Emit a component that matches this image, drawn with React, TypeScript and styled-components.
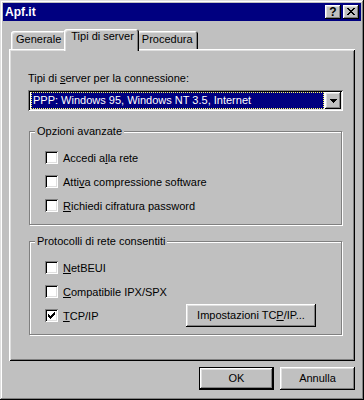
import React from "react";
import styled, { createGlobalStyle } from "styled-components";

const GlobalStyle = createGlobalStyle`
  html, body { margin: 0; padding: 0; background: #c0c0c0; }
  body {
    font-family: "Liberation Sans", Arial, sans-serif;
    font-size: 11px;
    color: #000;
  }
`;

const raised = `
  box-shadow: inset -1px -1px #000, inset 1px 1px #fff, inset -2px -2px #808080, inset 2px 2px #dfdfdf;
`;
const sunken = `
  box-shadow: inset 1px 1px #808080, inset -1px -1px #fff, inset 2px 2px #000, inset -2px -2px #dfdfdf;
`;

const Window = styled.div`
  width: 364px;
  height: 400px;
  box-sizing: border-box;
  padding: 3px;
  background: #c0c0c0;
  box-shadow: inset -1px -1px #000, inset 1px 1px #dfdfdf, inset -2px -2px #808080, inset 2px 2px #fff;
  display: flex;
  flex-direction: column;
`;

const TitleBar = styled.div`
  height: 18px;
  background: #000080;
  display: flex;
  align-items: center;
  padding: 0 2px 0 2px;
  color: #fff;
`;

const TitleText = styled.span`
  flex: 1;
  font-weight: bold;
  font-size: 12px;
  line-height: 18px;
`;

const TitleButtons = styled.div`
  display: flex;
  gap: 2px;
`;

const TitleButton = styled.div`
  width: 16px;
  height: 14px;
  box-sizing: border-box;
  background: #c0c0c0;
  ${raised}
  display: flex;
  align-items: center;
  justify-content: center;
  color: #000;
  font-weight: bold;
  font-size: 12px;
  line-height: 14px;
  padding-bottom: 1px;
`;

const Body = styled.div`
  padding: 8px 6px 0 6px;
  display: flex;
  flex-direction: column;
`;

const TabRow = styled.div`
  display: flex;
  align-items: flex-end;
  height: 20px;
  padding-left: 2px;
  position: relative;
  z-index: 1;
`;

const Tab = styled.div<{ $selected?: boolean }>`
  box-sizing: border-box;
  background: #c0c0c0;
  height: ${(p) => (p.$selected ? 22 : 18)}px;
  margin: ${(p) => (p.$selected ? "0 -2px -2px -2px" : "0")};
  padding: ${(p) => (p.$selected ? "1px 5px 0 7px" : "2px 5px 0 5px")};
  line-height: 13px;
  border-radius: 3px 3px 0 0;
  box-shadow: inset 1px 1px #fff, inset -1px 0 #000, inset -2px 0 #808080, inset 2px 2px #dfdfdf;
  white-space: nowrap;
  position: relative;
  z-index: ${(p) => (p.$selected ? 2 : 1)};
`;

const Panel = styled.div`
  height: 312px;
  box-sizing: border-box;
  box-shadow: inset 1px 1px #fff, inset -1px -1px #000, inset 2px 2px #dfdfdf, inset -2px -2px #808080;
  padding: 23px 12px 0 19px;
  display: flex;
  flex-direction: column;
`;

const Label = styled.div`
  line-height: 13px;
  white-space: nowrap;
`;

const Combo = styled.div`
  margin-top: 5px;
  height: 21px;
  box-sizing: border-box;
  background: #fff;
  ${sunken}
  padding: 2px;
  display: flex;
`;

const ComboValue = styled.div`
  flex: 1;
  margin: 0 1px 0 1px;
  background: #000080;
  color: #fff;
  outline: 1px dotted #ffff60;
  outline-offset: -1px;
  padding-left: 2px;
  line-height: 17px;
  white-space: nowrap;
  overflow: hidden;
`;

const DropButton = styled.div`
  width: 16px;
  height: 17px;
  box-sizing: border-box;
  background: #c0c0c0;
  ${raised}
  display: flex;
  align-items: center;
  justify-content: center;
`;

const Group = styled.fieldset<{ $gap: number }>`
  margin: ${(p) => p.$gap}px 1px 0 1px;
  padding: 13px 25px 12px 15px;
  min-width: 0;
  border: 1px solid #808080;
  box-shadow: inset 1px 1px #fff, 1px 1px #fff;
  display: flex;
  flex-direction: column;
  gap: 11px;
`;

const Legend = styled.legend`
  margin-left: -10px;
  padding: 0 2px;
  line-height: 13px;
  background: #c0c0c0;
  white-space: nowrap;
`;

const CheckRow = styled.div`
  display: flex;
  align-items: center;
  height: 13px;
  gap: 5px;
  white-space: nowrap;
`;

const CheckBox = styled.span`
  width: 13px;
  height: 13px;
  box-sizing: border-box;
  background: #fff;
  ${sunken}
  display: flex;
  align-items: center;
  justify-content: center;
  flex: none;
`;

const Button = styled.button<{ $default?: boolean; $width: number }>`
  width: ${(p) => p.$width}px;
  height: 23px;
  box-sizing: border-box;
  background: #c0c0c0;
  border: ${(p) => (p.$default ? "1px solid #000" : "none")};
  ${raised}
  font-family: "Liberation Sans", Arial, sans-serif;
  font-size: 11px;
  color: #000;
  padding: 0;
  line-height: 13px;
  white-space: nowrap;
`;

const SideButton = styled(Button)`
  margin: -5px 0 -5px auto;
`;

const Footer = styled.div`
  margin-top: 6px;
  display: flex;
  justify-content: flex-end;
  gap: 6px;
`;

const Px = ({ d, w, h }: { d: string; w: number; h: number }) => (
  <svg width={w} height={h} viewBox={`0 0 ${w} ${h}`} shapeRendering="crispEdges">
    <path d={d} fill="#000" />
  </svg>
);

const CLOSE =
  "M0 0h2v1H0z M6 0h2v1H6z M1 1h2v1H1z M5 1h2v1H5z M2 2h4v1H2z M3 3h2v1H3z M2 4h4v1H2z M1 5h2v1H1z M5 5h2v1H5z M0 6h2v1H0z M6 6h2v1H6z";
const CHECK =
  "M6 0h1v1H6z M5 1h2v1H5z M0 2h1v1H0z M4 2h3v1H4z M0 3h2v1H0z M3 3h3v1H3z M0 4h5v1H0z M1 5h3v1H1z M2 6h1v1H2z";
const ARROW = "M0 0h7v1H0z M1 1h5v1H1z M2 2h3v1H2z M3 3h1v1H3z";

const Check = ({ checked, children }: { checked?: boolean; children: React.ReactNode }) => (
  <CheckRow>
    <CheckBox>{checked && <Px d={CHECK} w={7} h={7} />}</CheckBox>
    <span>{children}</span>
  </CheckRow>
);

export default function App() {
  return (
    <>
      <GlobalStyle />
      <Window>
        <TitleBar>
          <TitleText>Apf.it</TitleText>
          <TitleButtons>
            <TitleButton>?</TitleButton>
            <TitleButton>
              <Px d={CLOSE} w={8} h={7} />
            </TitleButton>
          </TitleButtons>
        </TitleBar>
        <Body>
          <TabRow>
            <Tab>Generale</Tab>
            <Tab $selected>Tipi di server</Tab>
            <Tab>Procedura</Tab>
          </TabRow>
          <Panel>
            <Label>
              Tipi di <u>s</u>erver per la connessione:
            </Label>
            <Combo>
              <ComboValue>PPP: Windows 95, Windows NT 3.5, Internet</ComboValue>
              <DropButton>
                <Px d={ARROW} w={7} h={4} />
              </DropButton>
            </Combo>
            <Group $gap={14}>
              <Legend>Opzioni avanzate</Legend>
              <Check>
                Accedi a<u>l</u>la rete
              </Check>
              <Check>
                Atti<u>v</u>a compressione software
              </Check>
              <Check>
                <u>R</u>ichiedi cifratura password
              </Check>
            </Group>
            <Group $gap={10}>
              <Legend>Protocolli di rete consentiti</Legend>
              <Check>
                <u>N</u>etBEUI
              </Check>
              <Check>
                <u>C</u>ompatibile IPX/SPX
              </Check>
              <CheckRow>
                <CheckBox>
                  <Px d={CHECK} w={7} h={7} />
                </CheckBox>
                <span>
                  <u>T</u>CP/IP
                </span>
                <SideButton $width={130}>
                  Impostazioni TC<u>P</u>/IP...
                </SideButton>
              </CheckRow>
            </Group>
          </Panel>
          <Footer>
            <Button $default $width={75}>
              OK
            </Button>
            <Button $width={75}>Annulla</Button>
          </Footer>
        </Body>
      </Window>
    </>
  );
}
